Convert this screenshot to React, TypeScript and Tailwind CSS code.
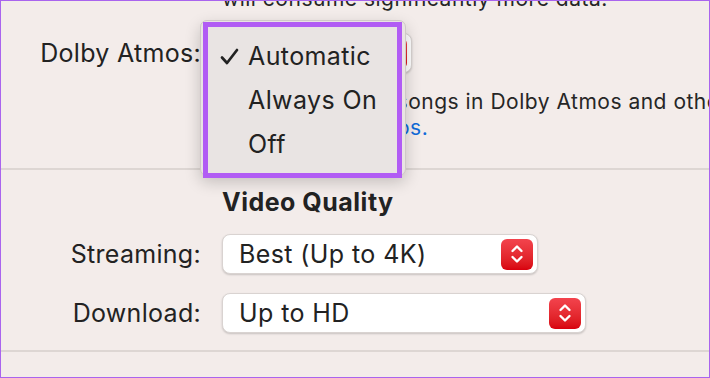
const FONT = "font-['Inter','Noto_Sans',sans-serif]";

function Stepper() {
    return (
        <div className="flex h-[31px] w-[32px] items-center justify-center rounded-[6px] bg-gradient-to-b from-[#f3434d] to-[#d8000d]">
            <svg width="14" height="22" viewBox="0 0 14 22" fill="none" stroke="white" strokeWidth="2.4" strokeLinecap="round" strokeLinejoin="round">
                <polyline points="2.5,8 7,3.5 11.5,8" />
                <polyline points="2.5,14 7,18.5 11.5,14" />
            </svg>
        </div>
    );
}

function PopupButton({ value, width }: { value: string; width: string }) {
    return (
        <div className={`flex h-[40px] ${width} items-center justify-between rounded-[8px] border-[0.5px] border-[#d9d3d1] bg-white pl-[16px] pr-[4px] shadow-[0_1px_2px_rgba(0,0,0,0.18)]`}>
            <span className="text-[25px] leading-[30px] tracking-[0.016em] text-[#222]">{value}</span>
            <Stepper />
        </div>
    );
}

function Row({ label, children, className = '' }: { label: string; children: React.ReactNode; className?: string }) {
    return (
        <div className={`flex h-[40px] items-center gap-[21px] ${className}`}>
            <span className="w-[200px] text-right text-[25px] leading-[30px] tracking-[0.012em] text-[#222]">{label}</span>
            {children}
        </div>
    );
}

function DolbyMenu() {
    const items = ['Automatic', 'Always On', 'Off'];
    return (
        <div className="absolute left-[199px] top-[19px] h-[156px] w-[206px] rounded-[7px] border-[0.5px] border-[#cfc9c7] bg-[#e9e4e3] pt-[13px] shadow-[0_6px_16px_rgba(0,0,0,0.2)]">
            {items.map((item, i) => (
                <div key={item} className="flex h-[44px] items-center">
                    <span className="flex w-[47px] justify-end pr-[9px]">
                        {i === 0 && (
                            <svg width="19" height="17" viewBox="0 0 19 17" fill="none" stroke="#222" strokeWidth="2.7" strokeLinecap="round" strokeLinejoin="round">
                                <polyline points="2,9.5 7,15 17,2" />
                            </svg>
                        )}
                    </span>
                    <span className="text-[25px] leading-[30px] tracking-[0.016em] text-[#222]">{item}</span>
                </div>
            ))}
            <div className="absolute left-[2px] top-[1px] h-[156px] w-[199px] border-[5px] border-[#b15cf4]" />
        </div>
    );
}

export default function App() {
    return (
        <div className={`relative h-[378px] w-[710px] overflow-hidden border border-[#a964ee] bg-[#f3ecea] ${FONT}`}>
            <div className="-mt-[15px] whitespace-nowrap pl-[221px] text-[21px] leading-[26px] tracking-[0.024em] text-[#262626]">
                will consume significantly more data.
            </div>

            <Row label="Dolby Atmos:" className="mt-[21px]">
                <PopupButton value="Automatic" width="w-[190px]" />
            </Row>

            <div className="mt-[16px] whitespace-nowrap pl-[221px] text-[21px] leading-[26px] tracking-[0.024em] text-[#262626]">
                <div>Plays supported songs in Dolby Atmos and other Spatial Audio formats.</div>
                <div className="text-[#0f6bd9]">About Dolby Atmos.</div>
            </div>

            <div className="mt-[27px] h-[2px] bg-[#ddd6d3]" />

            <div className="mt-[17px] pl-[221px] text-[25px] font-bold leading-[30px] tracking-[0.02em] text-[#222]">Video Quality</div>

            <Row label="Streaming:" className="mt-[17px]">
                <PopupButton value="Best (Up to 4K)" width="w-[316px]" />
            </Row>

            <Row label="Download:" className="mt-[19px]">
                <PopupButton value="Up to HD" width="w-[364px]" />
            </Row>

            <div className="mt-[17px] h-[2px] bg-[#ddd6d3]" />

            <DolbyMenu />
        </div>
    );
}
